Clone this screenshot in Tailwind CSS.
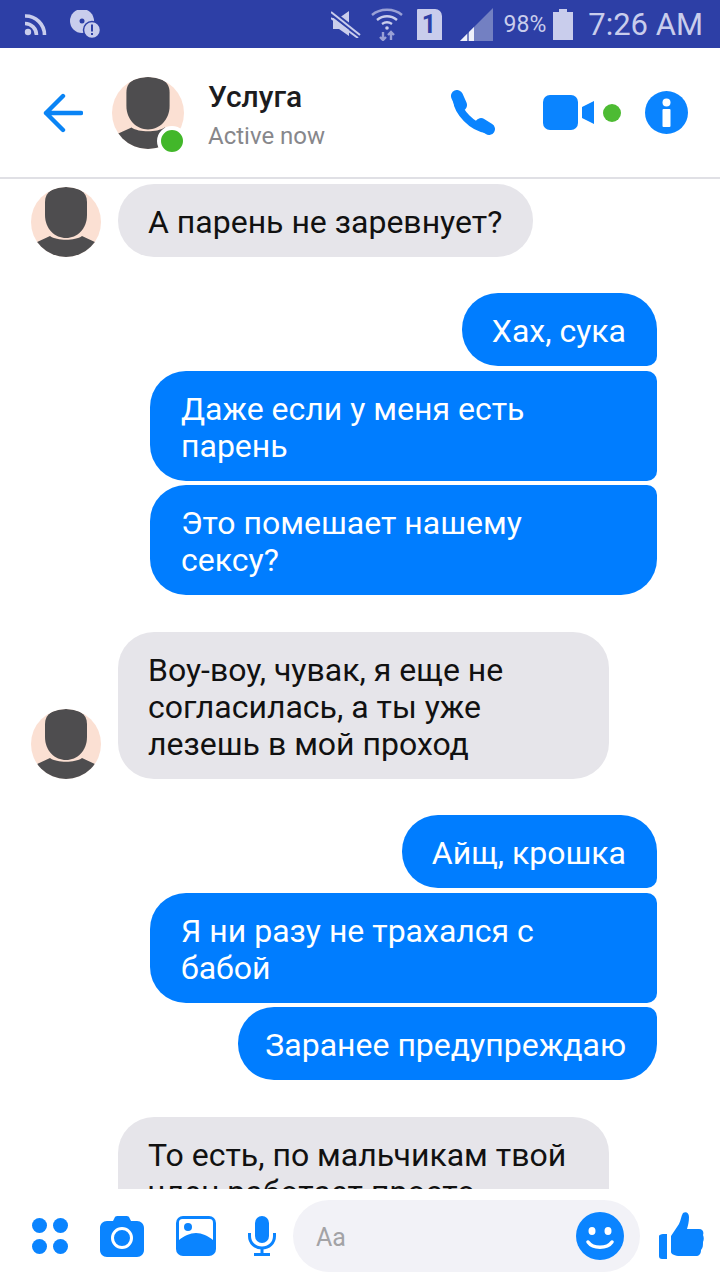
<!DOCTYPE html>
<html lang="en">
<head>
    <meta charset="UTF-8">
    <meta name="viewport" content="width=device-width, initial-scale=1.0">
    <title>Messenger chat</title>
    <script src="https://cdn.jsdelivr.net/npm/@tailwindcss/browser@4"></script>
</head>
<body class="bg-white font-['Roboto',sans-serif]">
    <!-- shared avatar -->
    <svg class="absolute h-0 w-0" width="0" height="0">
        <defs>
            <clipPath id="avatarClip"><circle cx="35" cy="35" r="35"/></clipPath>
            <symbol id="avatar" viewBox="0 0 70 70">
                <circle cx="35" cy="35" r="35" fill="#fbe0d3"/>
                <g clip-path="url(#avatarClip)" fill="#4e4d4f">
                    <path d="M14 15C14 4 23 0 35 0C47 0 56 4 56 15L56 28C56 42 46 51 35 51C24 51 14 42 14 28Z"/>
                    <path d="M2 70L4 56L19 49C26 54 44 54 51 49L66 56L68 70Z"/>
                </g>
            </symbol>
        </defs>
    </svg>

    <div class="flex h-[1280px] w-[720px] flex-col overflow-hidden">
        <!-- status bar -->
        <div class="flex h-[48px] shrink-0 items-center bg-[#2d3fa6] text-[#c9cdec]">
            <svg class="ml-[24px]" width="23" height="23" viewBox="0 0 23 23" fill="none" stroke="#c9cdec" stroke-width="3.6">
                <circle cx="4" cy="19" r="3.2" fill="#c9cdec" stroke="none"/>
                <path d="M1 10.5A11.5 11.5 0 0 1 12.5 22"/>
                <path d="M1 3A19 19 0 0 1 20.5 22"/>
            </svg>
            <svg class="ml-[23px]" width="30" height="28" viewBox="0 0 30 28">
                <circle cx="12" cy="11" r="12" fill="#c9cdec"/>
                <circle cx="12" cy="11" r="2.5" fill="#2d3fa6"/>
                <circle cx="22" cy="20" r="8.5" fill="#c9cdec" stroke="#2d3fa6" stroke-width="1.5"/>
                <rect x="21" y="14.5" width="2" height="7" fill="#2d3fa6"/>
                <rect x="21" y="23" width="2" height="2" fill="#2d3fa6"/>
            </svg>
            <svg class="ml-auto" width="30" height="28" viewBox="0 0 30 28">
                <path d="M2 8H8L18 1V26L8 19H2Z" fill="#c9cdec"/>
                <path d="M1 3L28 24" stroke="#2d3fa6" stroke-width="6"/>
                <path d="M0 2L29 25" stroke="#c9cdec" stroke-width="2"/>
                <path d="M0 8L27 28" stroke="#c9cdec" stroke-width="2"/>
            </svg>
            <svg class="ml-[10px]" width="32" height="34" viewBox="0 0 32 34" fill="none" stroke="#9aa1d6" stroke-width="2.4">
                <path d="M1 8C9 1 23 1 31 8"/>
                <path d="M6 13C12 8 20 8 26 13" stroke="#c9cdec"/>
                <path d="M11 17C14 15 18 15 21 17" stroke="#c9cdec"/>
                <circle cx="16" cy="21" r="1.8" fill="#c9cdec" stroke="none"/>
                <path d="M12 25V33M9 30L12 33L15 30M20 33V25M17 28L20 25L23 28"/>
            </svg>
            <div class="ml-[14px] flex h-[31px] w-[25px] items-center justify-center rounded-tl-[1px] rounded-tr-[7px] bg-[#c9cdec] text-[25px] leading-none font-bold text-[#2d3fa6]">1</div>
            <svg class="ml-[17px]" width="34" height="34" viewBox="0 0 34 34">
                <path d="M1 34L34 1V34Z" fill="#7380c2"/>
                <path d="M1 34L8 27V34Z" fill="#eef0fa"/>
                <path d="M10 25L15 20V34H10Z" fill="#eef0fa"/>
            </svg>
            <span class="ml-[11px] text-[23px] leading-none">98%</span>
            <svg class="ml-[7px]" width="20" height="31" viewBox="0 0 20 31">
                <path d="M0 3H6V0H14V3H20V31H0Z" fill="#c9cdec"/>
            </svg>
            <span class="mr-[17px] ml-[15px] text-[31px] leading-none font-normal">7:26 AM</span>
        </div>

        <!-- header -->
        <div class="flex h-[131px] shrink-0 items-center border-b-2 border-[#e0e0e5] bg-white">
            <svg class="ml-[43px]" width="40" height="40" viewBox="0 0 40 40" fill="none" stroke="#0a84f5" stroke-width="4.4" stroke-linecap="round" stroke-linejoin="round">
                <path d="M38 20H3M20 3L3 20L20 37"/>
            </svg>
            <div class="relative ml-[29px] h-[72px] w-[72px]">
                <svg width="72" height="72"><use href="#avatar"/></svg>
                <span class="absolute top-[49px] left-[45px] h-[30px] w-[30px] rounded-full border-4 border-white bg-[#42b72a]"></span>
            </div>
            <div class="ml-[24px] flex flex-col pt-[4px]">
                <span class="text-[30px] leading-[36px] font-medium text-[#1c1c1e]">Услуга</span>
                <span class="mt-[7px] text-[24px] leading-[28px] text-[#87878b]">Active now</span>
            </div>
            <div class="ml-auto flex items-center">
                <svg width="46" height="46" viewBox="0 0 46 46" fill="none" stroke="#0a84ff" stroke-linecap="round">
                    <path d="M7 10C8 22 22 37 36 39" stroke-width="8"/>
                    <path d="M7 6L11 15" stroke-width="12"/>
                    <path d="M31 34L39 39" stroke-width="12"/>
                </svg>
                <svg class="ml-[47px]" width="52" height="36" viewBox="0 0 52 36">
                    <rect x="0" y="0" width="35" height="35" rx="7" fill="#0a84ff"/>
                    <path d="M39 12L51 6V29L39 23Z" fill="#0a84ff"/>
                </svg>
                <span class="ml-[8px] h-[18px] w-[18px] rounded-full bg-[#4dbb33]"></span>
                <svg class="mr-[32px] ml-[24px]" width="43" height="43" viewBox="0 0 43 43">
                    <circle cx="21.5" cy="21.5" r="21.5" fill="#0a84ff"/>
                    <circle cx="21.5" cy="11.5" r="4" fill="#fff"/>
                    <rect x="17.5" y="18" width="8" height="18" rx="1" fill="#fff"/>
                </svg>
            </div>
        </div>

        <!-- messages -->
        <div class="min-h-0 flex-1 overflow-hidden pt-[5px] text-[32px] leading-[37px]">
            <div class="flex items-end pl-[31px]">
                <svg class="shrink-0" width="70" height="70"><use href="#avatar"/></svg>
                <div class="ml-[17px] rounded-[36px] bg-[#e6e5ea] pt-[20px] pr-[31px] pb-[16px] pl-[30px] text-[#111]">А парень не заревнует?</div>
            </div>

            <div class="mt-[36px] flex flex-col items-end gap-[4.5px] pr-[63px] text-white">
                <div class="rounded-[36px] rounded-br-[10px] bg-[#007dff] pt-[20px] pr-[31px] pb-[16px] pl-[30px]">Хах, сука</div>
                <div class="w-[507px] rounded-l-[36px] rounded-r-[10px] bg-[#007dff] pt-[20px] pr-[31px] pb-[16px] pl-[31px]">Даже если у меня есть<br>парень</div>
                <div class="w-[507px] rounded-[36px] rounded-tr-[10px] bg-[#007dff] pt-[20px] pr-[31px] pb-[16px] pl-[31px]">Это помешает нашему<br>сексу?</div>
            </div>

            <div class="mt-[36.5px] flex items-end pl-[31px]">
                <svg class="shrink-0" width="70" height="70"><use href="#avatar"/></svg>
                <div class="ml-[17px] w-[491px] rounded-[36px] bg-[#e6e5ea] pt-[20px] pr-[31px] pb-[16px] pl-[30px] text-[#111]">Воу-воу, чувак, я еще не<br>согласилась, а ты уже<br>лезешь в мой проход</div>
            </div>

            <div class="mt-[36.5px] flex flex-col items-end gap-[4.5px] pr-[63px] text-white">
                <div class="rounded-[36px] rounded-br-[10px] bg-[#007dff] pt-[20px] pr-[31px] pb-[16px] pl-[30px]">Айщ, крошка</div>
                <div class="w-[507px] rounded-l-[36px] rounded-r-[10px] bg-[#007dff] pt-[20px] pr-[31px] pb-[16px] pl-[31px]">Я ни разу не трахался с<br>бабой</div>
                <div class="w-[419px] rounded-[36px] rounded-tr-[10px] bg-[#007dff] pt-[20px] pr-[31px] pb-[16px] text-right">Заранее предупреждаю</div>
            </div>

            <div class="mt-[36.5px] ml-[118px] w-[491px] rounded-[36px] bg-[#e6e5ea] pt-[20px] pr-[31px] pb-[16px] pl-[30px] text-[#111]">То есть, по мальчикам твой<br>член работает просто</div>
        </div>

        <!-- composer -->
        <div class="flex h-[91px] shrink-0 items-center bg-white pt-[3px]">
            <svg class="ml-[32px]" width="36" height="36" viewBox="0 0 36 36" fill="#0a84ff">
                <circle cx="7.5" cy="7.5" r="7.5"/><circle cx="28.5" cy="7.5" r="7.5"/>
                <circle cx="7.5" cy="28.5" r="7.5"/><circle cx="28.5" cy="28.5" r="7.5"/>
            </svg>
            <svg class="ml-[32px]" width="44" height="41" viewBox="0 0 44 41">
                <path d="M7 5H13L15 1C15.500 0 17 0 18 0H26C27 0 28.500 0 29 1L31 5H37C41 5 44 8 44 12V34C44 38 41 41 37 41H7C3 41 0 38 0 34V12C0 8 3 5 7 5Z" fill="#0a84ff"/>
                <circle cx="22" cy="22" r="9.500" fill="none" stroke="#fff" stroke-width="3"/>
            </svg>
            <svg class="ml-[32px]" width="40" height="40" viewBox="0 0 40 40">
                <rect x="0" y="0" width="40" height="40" rx="7" fill="#0a84ff"/>
                <path d="M3 24V7C3 4 4 3 7 3H33C36 3 37 4 37 7V24C32 20 26 17 20 17C14 17 8 20 3 24Z" fill="#fff"/>
                <circle cx="12" cy="11" r="4" fill="#0a84ff"/>
            </svg>
            <svg class="ml-[32px]" width="28" height="40" viewBox="0 0 28 40" fill="none">
                <rect x="7" y="0" width="14" height="27" rx="7" fill="#0a84ff"/>
                <path d="M1.500 17V20C1.500 27 7 32 14 32C21 32 26.500 27 26.500 20V17" stroke="#0a84ff" stroke-width="3"/>
                <path d="M14 32V38M6 38.500H22" stroke="#0a84ff" stroke-width="3"/>
            </svg>
            <div class="ml-[17px] flex h-[72px] w-[347px] items-center justify-between rounded-[36px] bg-[#f2f2f7] pr-[16px] pl-[23px]">
                <span class="pt-[3px] text-[25px] text-[#a3a3a6]">Aa</span>
                <svg width="48" height="48" viewBox="0 0 48 48">
                    <circle cx="24" cy="24" r="24" fill="#0a84ff"/>
                    <ellipse cx="16" cy="19" rx="3.500" ry="4" fill="#fff"/>
                    <ellipse cx="32" cy="19" rx="3.500" ry="4" fill="#fff"/>
                    <path d="M12 30C17 37 31 37 36 30" fill="none" stroke="#fff" stroke-width="3.500" stroke-linecap="round"/>
                </svg>
            </div>
            <svg class="ml-[18px]" width="46" height="48" viewBox="0 0 46 48" fill="#0a84ff">
                <path d="M1 24C1 23 3 22 5 22H9V47H4C2 47 1 46 1 44Z"/>
                <path d="M13 24L21 12C23 8 23 4 25 1C28 -1 31 1 31 5C31 10 30 13 29 17H41C45 17 46 20 45 23C46 25 46 28 45 30C45 33 45 36 43 38C43 42 41 44 38 44H22C17 44 13 42 13 40Z"/>
            </svg>
        </div>
    </div>
</body>
</html>
